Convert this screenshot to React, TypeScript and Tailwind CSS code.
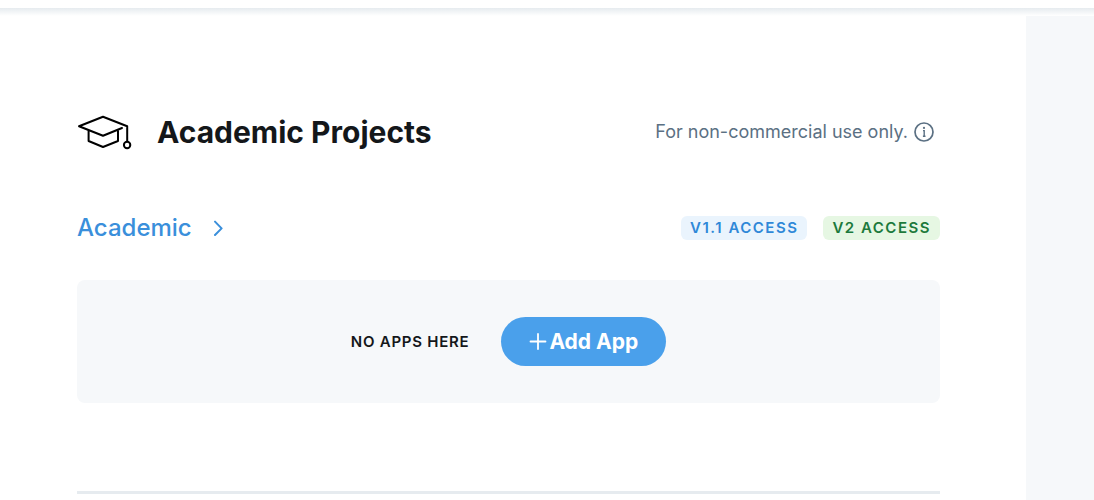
import React from "react";

function GraduationCapIcon() {
  return (
    <svg
      className="h-9 w-14 shrink-0"
      viewBox="0 0 56 36"
      fill="none"
      stroke="#000"
      strokeWidth="2"
      strokeLinejoin="round"
      strokeLinecap="round"
      aria-hidden="true"
    >
      <path d="M45 14 L26 21.8 L2 12.2 L26 2.8 L50.2 12.2 V27" />
      <path d="M11.6 17 V27 L26 33 L41 27 V17" />
      <circle cx="50.1" cy="31" r="3.2" />
    </svg>
  );
}

function InfoIcon() {
  return (
    <svg className="size-5" viewBox="0 0 20 20" fill="none" stroke="#5b7083" aria-hidden="true">
      <circle cx="10" cy="10" r="9" strokeWidth="1.7" />
      <path d="M9 8.6 H10.2 V14.2 M8.9 14.2 H11.5" strokeWidth="1.4" />
      <circle cx="10" cy="5.9" r="1.1" fill="#5b7083" stroke="none" />
    </svg>
  );
}

function ChevronIcon() {
  return (
    <svg
      className="h-4 w-3"
      viewBox="0 0 12 16"
      fill="none"
      stroke="#3a8fdb"
      strokeWidth="2"
      strokeLinecap="round"
      strokeLinejoin="round"
      aria-hidden="true"
    >
      <path d="M2 1.6 L8.6 8.4 L2 15" />
    </svg>
  );
}

function PlusIcon() {
  return (
    <svg className="size-5" viewBox="0 0 20 20" stroke="#fff" strokeWidth="1.8" strokeLinecap="round" aria-hidden="true">
      <path d="M9 2 V17 M1.5 9.5 H16.5" />
    </svg>
  );
}

export default function App() {
  return (
    <div className="min-h-screen bg-[#f6f8fa] font-['Inter','Liberation_Sans',sans-serif]">
      <header className="bg-white pt-2">
        <div className="h-2 bg-linear-to-b from-[#e6ebef] to-white" />
      </header>
      <main className="mr-17 min-h-[calc(100vh-16px)] bg-white pt-23 pr-[86px] pl-[77px]">
        <section className="border-b-3 border-[#e6ebef] pb-22">
          <div className="flex h-12 items-center justify-between">
            <div className="flex items-center gap-6">
              <GraduationCapIcon />
              <h1 className="text-[30px] leading-10 font-bold text-[#14171a]">Academic Projects</h1>
            </div>
            <div className="flex items-center gap-1.5 pr-1.5">
              <p className="text-[18px] leading-6 text-[#5b7083]">For non-commercial use only.</p>
              <button type="button" aria-label="More information">
                <InfoIcon />
              </button>
            </div>
          </div>
          <div className="mt-12 flex h-12 items-center justify-between">
            <a href="#academic" className="flex items-center gap-[21px] text-[24px] leading-8 font-medium text-[#3a8fdb]">
              Academic
              <ChevronIcon />
            </a>
            <div className="flex items-center gap-4">
              <span className="rounded-md bg-[#eaf4fd] px-[9px] text-[15px] leading-6 font-semibold tracking-widest text-[#2f88d8]">
                V1.1 ACCESS
              </span>
              <span className="rounded-md bg-[#e6f7e3] px-[9px] text-[15px] leading-6 font-semibold tracking-widest text-[#1c7a3c]">
                V2 ACCESS
              </span>
            </div>
          </div>
          <div className="mt-7 flex h-[123px] items-center justify-center gap-8 rounded-lg bg-[#f6f8fa]">
            <p className="text-[15px] leading-6 font-semibold tracking-wider text-[#14171a]">NO APPS HERE</p>
            <button
              type="button"
              className="flex h-[49px] items-center rounded-full bg-[#4aa0eb] px-7 text-[21px] leading-7 font-bold text-white"
            >
              <PlusIcon />
              Add App
            </button>
          </div>
        </section>
      </main>
    </div>
  );
}
